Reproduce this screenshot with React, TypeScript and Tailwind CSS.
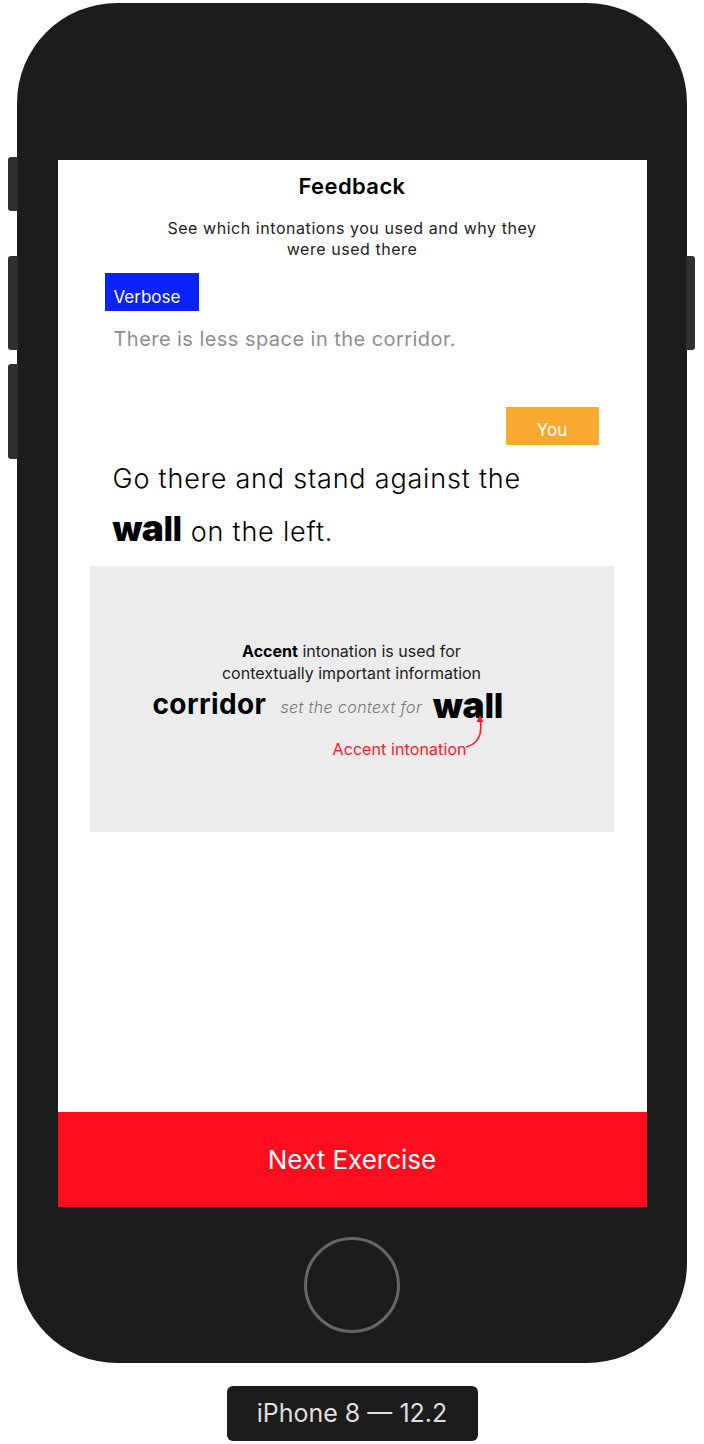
import React from "react";

export default function App() {
  return (
    <div
      className="w-[704px] h-[1444px] bg-white flex flex-col items-center pt-[3px]"
      style={{ fontFamily: "Inter, 'Noto Sans', sans-serif" }}
    >
      {/* Phone body */}
      <div className="relative w-[670px] h-[1360px] rounded-[100px] bg-[#1c1c1c] flex flex-col items-center pt-[157px]">
        {/* side buttons */}
        <div className="absolute left-[-9px] top-[154px] w-[10px] h-[54px] rounded-l-[3px] bg-[#2f2f2f]" />
        <div className="absolute left-[-9px] top-[253px] w-[10px] h-[94px] rounded-l-[3px] bg-[#2f2f2f]" />
        <div className="absolute left-[-9px] top-[361px] w-[10px] h-[95px] rounded-l-[3px] bg-[#2f2f2f]" />
        <div className="absolute right-[-8px] top-[253px] w-[9px] h-[94px] rounded-r-[3px] bg-[#2f2f2f]" />

        {/* Screen */}
        <div className="w-[589px] h-[1047px] bg-white flex flex-col">
          <div className="pt-[12px] text-center text-[22px] leading-[28px] font-semibold tracking-[0.4px] text-black">
            Feedback
          </div>
          <div className="mt-[18px] mx-auto w-[390px] text-center text-[16px] leading-[21px] tracking-[0.55px] text-[#222]">
            See which intonations you used and why they were used there
          </div>

          <div className="mt-[13px] ml-[47px] w-[94px] h-[38px] bg-[#0a22ff] flex items-center pl-[9px] pt-[11px] text-white text-[17px]">
            Verbose
          </div>
          <div className="mt-[14px] ml-[56px] text-[20px] leading-[28px] tracking-[0.45px] text-[#8e8e8e]">
            There is less space in the corridor.
          </div>

          <div className="mt-[54px] self-end mr-[48px] w-[93px] h-[38px] bg-[#f8a92f] flex items-center justify-center pt-[10px] text-white text-[17px]">
            You
          </div>

          <div className="mt-[8px] ml-[55px] text-[27px] leading-[52px] font-light tracking-[0.8px] text-black">
            <div>Go there and stand against the</div>
            <div className="flex items-baseline -mt-[3px]">
              <span className="font-black text-[34px] tracking-[-0.5px]">
                w<span className="text-[37px]">a</span>
                <span className="font-extrabold">ll</span>
              </span>
              <span className="ml-[9px]">on the left.</span>
            </div>
          </div>

          {/* Gray explanation box */}
          <div className="mt-[8px] ml-[32px] w-[524px] h-[266px] bg-[#ececec] flex flex-col pt-[74px]">
            <div className="text-center text-[16px] leading-[22px] text-[#222]">
              <span className="font-bold text-black">Accent</span> intonation is used for
            </div>
            <div className="text-center text-[16px] leading-[22px] text-[#222]">
              contextually important information
            </div>
            <div className="ml-[63px] h-[40px] flex items-center">
              <span className="font-bold text-[28px] text-black tracking-[0.4px]">corridor</span>
              <span className="ml-[14px] mt-[6px] italic font-light text-[16px] tracking-[0.4px] text-[#777]">
                set the context for
              </span>
              <span className="ml-[11px] font-black text-[34px] text-black tracking-[-0.3px] leading-none">
                w<span className="text-[37px]">a</span>
                <span className="font-extrabold">ll</span>
              </span>
            </div>
            <div className="relative ml-[243px] mt-[14px] h-[22px] text-[16px] leading-[22px] tracking-[0.1px] text-[#fc1a2a]">
              Accent intonation
              <svg
                className="absolute left-[130px] top-[-25px]"
                width="30"
                height="38"
                viewBox="0 0 30 38"
                fill="none"
              >
                <path
                  d="M3 34 C 14 31, 20 22, 17 6"
                  stroke="#fc1a2a"
                  strokeWidth="1.6"
                  fill="none"
                />
                <path d="M13.5 9 L17 2 L20.5 9 Z" fill="#fc1a2a" />
              </svg>
            </div>
          </div>

          <div className="flex-1" />
          <div className="h-[95px] bg-[#fc0e1e] flex items-center justify-center text-white text-[26px]">
            Next Exercise
          </div>
        </div>

        {/* Home button */}
        <div className="mt-[30px] w-[96px] h-[96px] rounded-full border-[3px] border-[#666]" />
      </div>

      {/* Label */}
      <div className="mt-[23px] w-[251px] h-[55px] rounded-[6px] bg-[#1c1c1c] flex items-center justify-center text-[25px] text-[#dedede]">
        iPhone 8 — 12.2
      </div>
    </div>
  );
}
